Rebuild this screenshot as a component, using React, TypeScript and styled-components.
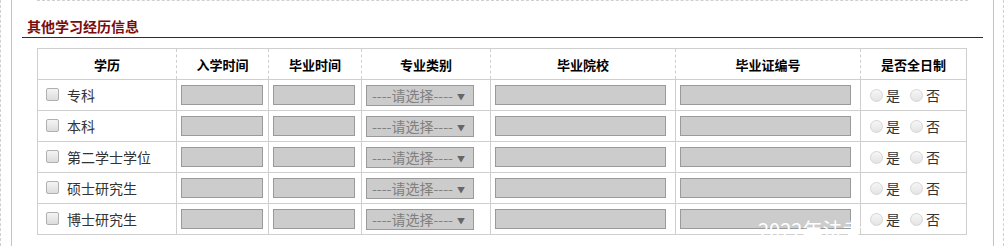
import React from "react";
import styled, { createGlobalStyle } from "styled-components";

const Global = createGlobalStyle`
  html, body { margin: 0; padding: 0; background: #fff; }
  body { font-family: "Noto Sans CJK SC", "Noto Sans", sans-serif; font-size: 14px; color: #333; }
  * { box-sizing: border-box; }
`;

const Page = styled.div`
  position: relative;
  width: 1004px;
  height: 246px;
  overflow: hidden;
  border-left: 1px dashed #d0d0d0;
  border-right: 1px dashed #d0d0d0;
  padding-left: 10px;
  padding-right: 9px;
`;

const Panel = styled.div`
  height: 100%;
  border-left: 1px solid #c4c4c4;
  border-right: 1px solid #c4c4c4;
`;

const PrevBlock = styled.div`
  margin-left: 25px;
  width: 931px;
  border-top: 1px dashed #d0d0d0;
`;

const SectionTitle = styled.div`
  margin-left: 10px;
  margin-right: 10px;
  padding: 15px 0 1px 5px;
  line-height: 20px;
  font-size: 14px;
  font-weight: bold;
  color: #7a0c0c;
  border-bottom: 1px solid #7a0c0c;
`;

const Table = styled.table`
  margin: 10px 0 0 25px;
  width: 929px;
  table-layout: fixed;
  border-collapse: collapse;
`;

const HeadCell = styled.th`
  height: 31px;
  padding: 0;
  border-top: 1px solid #cfcfcf;
  border-bottom: 1px solid #cfcfcf;
  border-left: 1px dashed #cfcfcf;
  border-right: 1px dashed #cfcfcf;
  font-size: 13px;
  font-weight: bold;
  color: #000;
  text-align: center;
  &:first-child { border-left: 1px solid #cfcfcf; }
  &:last-child { border-right: 1px solid #cfcfcf; }
`;

const Cell = styled.td`
  height: 31px;
  padding: 0 0 0 4px;
  border: 1px solid #cfcfcf;
  vertical-align: middle;
`;

const LabelCell = styled(Cell)`
  padding-left: 8px;
`;

const Inline = styled.div`
  display: flex;
  align-items: center;
`;

const CheckBox = styled.span`
  display: inline-block;
  width: 13px;
  height: 13px;
  border: 1px solid #b0b0b0;
  border-radius: 2px;
  background: linear-gradient(#f4f4f4, #dcdcdc);
  margin-right: 8px;
  margin-top: -1px;
`;

const Label = styled.span`
  font-size: 14px;
  color: #333;
  line-height: 20px;
`;

const TextBox = styled.div<{ $w: number }>`
  width: ${(p) => p.$w}px;
  height: 20px;
  border: 1px solid #9a9a9a;
  background: #cccccc;
`;

const SelectBox = styled.div`
  position: relative;
  width: 108px;
  height: 21px;
  border: 1px solid #9a9a9a;
  background: #cccccc;
  padding-left: 5px;
  font-size: 14px;
  line-height: 19px;
  color: #808080;
  white-space: nowrap;
`;

const Arrow = styled.span`
  position: absolute;
  right: 8px;
  top: 1px;
  font-size: 8px;
  color: #666;
`;

const RadioGroup = styled.div`
  display: flex;
  align-items: center;
  padding-left: 5px;
`;

const Radio = styled.span`
  display: inline-block;
  width: 13px;
  height: 13px;
  border-radius: 50%;
  border: 1px solid #d6d6d6;
  background: linear-gradient(#f6f6f6, #e4e4e4);
  margin-right: 3px;
`;

const RadioLabel = styled.span`
  font-size: 14px;
  color: #333;
  margin-right: 10px;
  line-height: 20px;
`;

const Watermark = styled.div`
  position: absolute;
  left: 757px;
  top: 219px;
  font-size: 20px;
  line-height: 22px;
  color: #fff;
  white-space: nowrap;
`;

const cols = [139, 92, 93, 129, 185, 185, 106];
const heads = ["学历", "入学时间", "毕业时间", "专业类别", "毕业院校", "毕业证编号", "是否全日制"];
const degrees = ["专科", "本科", "第二学士学位", "硕士研究生", "博士研究生"];

export default function App() {
  return (
    <>
      <Global />
      <Page>
        <Panel>
          <PrevBlock />
          <SectionTitle>其他学习经历信息</SectionTitle>
          <Table>
            <colgroup>
              {cols.map((w, i) => (
                <col key={i} style={{ width: w }} />
              ))}
            </colgroup>
            <thead>
              <tr>
                {heads.map((h) => (
                  <HeadCell key={h}>{h}</HeadCell>
                ))}
              </tr>
            </thead>
            <tbody>
              {degrees.map((d) => (
                <tr key={d}>
                  <LabelCell>
                    <Inline>
                      <CheckBox />
                      <Label>{d}</Label>
                    </Inline>
                  </LabelCell>
                  <Cell><TextBox $w={82} /></Cell>
                  <Cell><TextBox $w={82} /></Cell>
                  <Cell>
                    <SelectBox>
                      ----请选择----
                      <Arrow>▼</Arrow>
                    </SelectBox>
                  </Cell>
                  <Cell><TextBox $w={171} /></Cell>
                  <Cell><TextBox $w={171} /></Cell>
                  <Cell>
                    <RadioGroup>
                      <Radio />
                      <RadioLabel>是</RadioLabel>
                      <Radio />
                      <RadioLabel>否</RadioLabel>
                    </RadioGroup>
                  </Cell>
                </tr>
              ))}
            </tbody>
          </Table>
        </Panel>
        <Watermark>2022年法考</Watermark>
      </Page>
    </>
  );
}
